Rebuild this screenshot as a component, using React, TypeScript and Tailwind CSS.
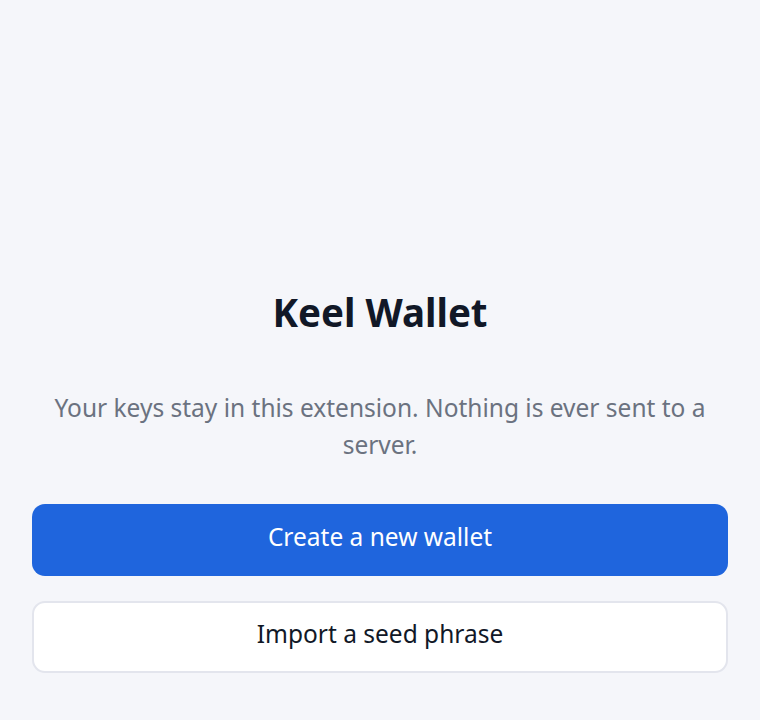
import React from "react";

export default function App() {
  return (
    <div
      className="flex h-[720px] w-[760px] flex-col bg-[#f5f6fa] px-8"
      style={{ fontFamily: '"Noto Sans", "Open Sans", sans-serif' }}
    >
      <div className="h-[287px]" />
      <h1 className="text-center text-[38.5px] font-bold leading-[50px] text-[#111827]">
        Keel Wallet
      </h1>
      <p className="mt-[52px] text-center text-[24.5px] leading-[37px] text-[#6b7280]">
        Your keys stay in this extension. Nothing is ever sent to a server.
      </p>
      <div className="mt-[41px] flex flex-col gap-[25px]">
        <button className="h-[72px] w-full rounded-[13px] bg-[#1f65dd] pb-[5px] text-[24.5px] text-white">
          Create a new wallet
        </button>
        <button className="h-[72px] w-full rounded-[13px] border-2 border-[#e3e5ed] bg-white pb-[5px] text-[24.5px] text-[#111827]">
          Import a seed phrase
        </button>
      </div>
    </div>
  );
}
